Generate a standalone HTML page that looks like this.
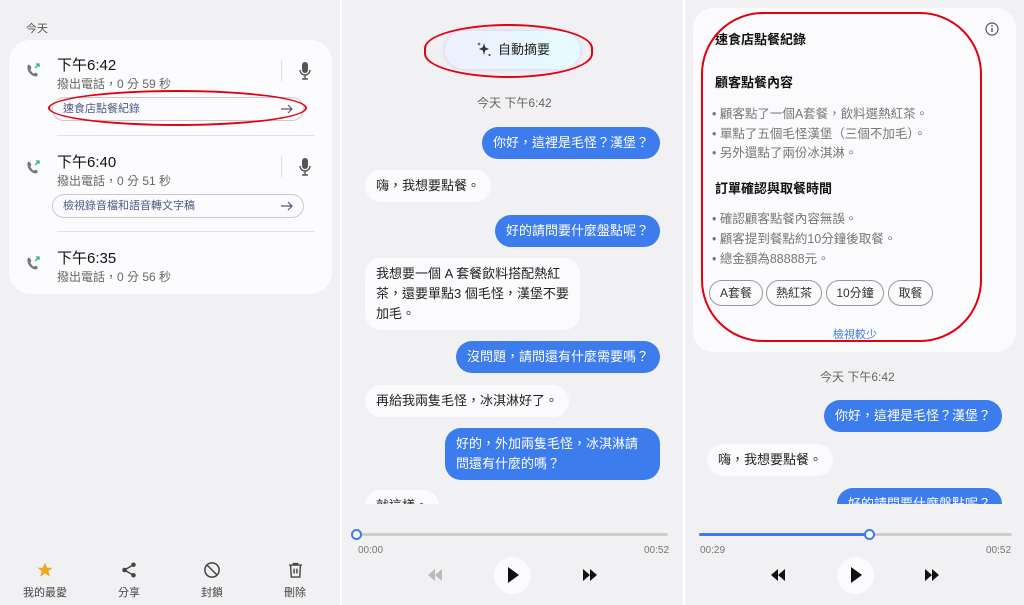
<!DOCTYPE html>
<html><head><meta charset="utf-8"><style>
*{margin:0;padding:0;box-sizing:border-box}
body{width:1024px;height:605px;background:#f1f1f3;font-family:"Liberation Sans","Noto Sans CJK TC",sans-serif;position:relative;overflow:hidden}
.a{position:absolute;white-space:nowrap}
.sep{position:absolute;top:0;width:2px;height:605px;background:#fff}
.t{font-size:15px;color:#111}
.s{font-size:12px;color:#666}
.pill{position:absolute;height:24px;border:1px solid #c8cad0;border-radius:12px;font-size:11px;color:#4d5a85;padding-left:10px;line-height:22px;background:#fbfbfd}
.pill svg{position:absolute;right:9px;top:5px}
.b{position:absolute;font-size:13px;line-height:20px;padding:6px 11px;border-radius:16px;white-space:nowrap}
.bl{background:#3c7cec;color:#fff}
.wh{background:#fbfbfd;color:#222}
.li{font-size:12.5px;color:#777}
.chip{position:absolute;top:280px;height:26px;border:1px solid #999;border-radius:13px;font-size:12px;color:#333;line-height:24px;text-align:center}
.lab{font-size:11px;color:#444;text-align:center;width:60px}
</style></head><body>
<div class="sep" style="left:340px"></div>
<div class="sep" style="left:683px"></div>

<!-- Panel 1 -->
<div class="a" style="left:26px;top:20px;font-size:11px;color:#555">今天</div>
<div class="a" style="left:9px;top:40px;width:323px;height:254px;background:#fcfcfe;border-radius:22px"></div>
<svg class="a" style="left:25px;top:62px" width="16" height="16" viewBox="0 0 16 16"><path d="M3 3c1-1 2 0 3 2s-1 2-.5 3 2 3 3 3.5 1.5-1.5 3-.5 1.5 2 .5 3-4 .5-7-2.5S2 4 3 3z" fill="#777"/><path d="M10 6l4-4M11 2h3v3" stroke="#2bb673" stroke-width="1.3" fill="none"/></svg>
<svg class="a" style="left:25px;top:159px" width="16" height="16" viewBox="0 0 16 16"><path d="M3 3c1-1 2 0 3 2s-1 2-.5 3 2 3 3 3.5 1.5-1.5 3-.5 1.5 2 .5 3-4 .5-7-2.5S2 4 3 3z" fill="#777"/><path d="M10 6l4-4M11 2h3v3" stroke="#2bb673" stroke-width="1.3" fill="none"/></svg>
<svg class="a" style="left:25px;top:255px" width="16" height="16" viewBox="0 0 16 16"><path d="M3 3c1-1 2 0 3 2s-1 2-.5 3 2 3 3 3.5 1.5-1.5 3-.5 1.5 2 .5 3-4 .5-7-2.5S2 4 3 3z" fill="#777"/><path d="M10 6l4-4M11 2h3v3" stroke="#2bb673" stroke-width="1.3" fill="none"/></svg>
<div class="a t" style="left:57px;top:54px">下午6:42</div>
<div class="a s" style="left:57px;top:75px">撥出電話，0 分 59 秒</div>
<div class="a" style="left:281px;top:60px;width:1px;height:21px;background:#ddd"></div>
<svg class="a" style="left:297px;top:61px" width="16" height="20" viewBox="0 0 16 20"><rect x="5" y="1" width="6" height="11" rx="3" fill="#555"/><path d="M3 9a5 5 0 0 0 10 0M8 14v4M5 18h6" stroke="#555" stroke-width="1.4" fill="none"/></svg>
<div class="pill" style="left:52px;top:97px;width:252px">速食店點餐紀錄<svg width="14" height="12" viewBox="0 0 14 12"><path d="M1 6h11M8 2l4 4-4 4" stroke="#4d5a85" stroke-width="1.2" fill="none"/></svg></div>
<div class="a" style="left:48px;top:90px;width:259px;height:36px;border:2.5px solid #e3000f;border-radius:50%"></div>
<div class="a" style="left:57px;top:135px;width:258px;height:1px;background:#e2e2e6"></div>
<div class="a t" style="left:57px;top:151px">下午6:40</div>
<div class="a s" style="left:57px;top:172px">撥出電話，0 分 51 秒</div>
<div class="a" style="left:281px;top:156px;width:1px;height:21px;background:#ddd"></div>
<svg class="a" style="left:297px;top:157px" width="16" height="20" viewBox="0 0 16 20"><rect x="5" y="1" width="6" height="11" rx="3" fill="#555"/><path d="M3 9a5 5 0 0 0 10 0M8 14v4M5 18h6" stroke="#555" stroke-width="1.4" fill="none"/></svg>
<div class="pill" style="left:52px;top:194px;width:252px">檢視錄音檔和語音轉文字稿<svg width="14" height="12" viewBox="0 0 14 12"><path d="M1 6h11M8 2l4 4-4 4" stroke="#4d5a85" stroke-width="1.2" fill="none"/></svg></div>
<div class="a" style="left:57px;top:231px;width:258px;height:1px;background:#e2e2e6"></div>
<div class="a t" style="left:57px;top:247px">下午6:35</div>
<div class="a s" style="left:57px;top:268px">撥出電話，0 分 56 秒</div>

<svg class="a" style="left:36px;top:561px" width="18" height="18" viewBox="0 0 24 24"><path d="M12 2l3 7h7l-5.5 4.5L18.5 21 12 16.5 5.5 21l2-7.5L2 9h7z" fill="#f5a51c"/></svg>
<svg class="a" style="left:120px;top:561px" width="18" height="18" viewBox="0 0 24 24"><circle cx="18" cy="5" r="3" fill="#444"/><circle cx="6" cy="12" r="3" fill="#444"/><circle cx="18" cy="19" r="3" fill="#444"/><path d="M18 5L6 12l12 7" stroke="#444" stroke-width="2" fill="none"/></svg>
<svg class="a" style="left:203px;top:561px" width="18" height="18" viewBox="0 0 24 24"><circle cx="12" cy="12" r="9.5" stroke="#444" stroke-width="2" fill="none"/><path d="M5.5 5.5l13 13" stroke="#444" stroke-width="2"/></svg>
<svg class="a" style="left:287px;top:561px" width="17" height="18" viewBox="0 0 24 24"><path d="M3 5h18M9 5V3h6v2M5 5l1 17h12l1-17M10 10v7M14 10v7" stroke="#444" stroke-width="2" fill="none"/></svg>
<div class="a lab" style="left:15px;top:584px">我的最愛</div>
<div class="a lab" style="left:99px;top:584px">分享</div>
<div class="a lab" style="left:182px;top:584px">封鎖</div>
<div class="a lab" style="left:265px;top:584px">刪除</div>

<!-- Panel 2 -->
<div class="a" style="left:445px;top:31px;width:135px;height:38px;border-radius:19px;background:linear-gradient(90deg,#eef0ff,#e6fbff);box-shadow:0 0 6px #c9ccf5;font-size:13px;color:#222;line-height:38px;padding-left:53px">自動摘要</div>
<svg class="a" style="left:476px;top:41px" width="16" height="16" viewBox="0 0 16 16"><path d="M8 2l1.2 4.3L13 8l-3.8 1.5L8 14l-1.2-4.5L3 8l3.8-1.7z" fill="#334"/><path d="M3 1l.5 1.5L5 3l-1.5.5L3 5l-.5-1.5L1 3l1.5-.5z" fill="#334"/><circle cx="13.5" cy="14" r="1" fill="#334"/></svg>
<div class="a" style="left:424px;top:24px;width:169px;height:54px;border:2.5px solid #e3000f;border-radius:50%/45%"></div>
<div class="a s" style="left:477px;top:94px">今天 下午6:42</div>
<div style="position:absolute;left:342px;top:110px;width:341px;height:394px;overflow:hidden">
<div class="b bl" style="right:23px;top:17px">你好，這裡是毛怪？漢堡？</div>
<div class="b wh" style="left:23px;top:60px">嗨，我想要點餐。</div>
<div class="b bl" style="right:23px;top:105px">好的請問要什麼盤點呢？</div>
<div class="b wh" style="left:23px;top:148px;white-space:normal;width:215px">我想要一個 A 套餐飲料搭配熱紅茶，還要單點3 個毛怪，漢堡不要加毛。</div>
<div class="b bl" style="right:23px;top:231px">沒問題，請問還有什麼需要嗎？</div>
<div class="b wh" style="left:23px;top:275px">再給我兩隻毛怪，冰淇淋好了。</div>
<div class="b bl" style="right:23px;top:318px;white-space:normal;width:215px">好的，外加兩隻毛怪，冰淇淋請問還有什麼的嗎？</div>
<div class="b wh" style="left:23px;top:380px">就這樣。</div>
</div>
<div class="a" style="left:357px;top:533px;width:311px;height:3px;background:#ccc;border-radius:2px"></div>
<div class="a" style="left:351px;top:529px;width:11px;height:11px;border:2px solid #3c7cec;border-radius:50%;background:#fff"></div>
<div class="a" style="left:358px;top:545px;font-size:10px;color:#777">00:00</div>
<div class="a" style="left:644px;top:545px;font-size:10px;color:#777">00:52</div>
<svg class="a" style="left:427px;top:569px" width="16" height="12" viewBox="0 0 16 12"><path d="M8 0L1 6l7 6zM15 0L8 6l7 6z" fill="#bbb"/></svg>
<div class="a" style="left:494px;top:557px;width:37px;height:37px;border-radius:50%;background:#fbfbfd"></div>
<svg class="a" style="left:507px;top:567px" width="12" height="16" viewBox="0 0 12 16"><path d="M1 0l11 8-11 8z" fill="#111"/></svg>
<svg class="a" style="left:582px;top:569px" width="16" height="12" viewBox="0 0 16 12"><path d="M1 0l7 6-7 6zM8 0l7 6-7 6z" fill="#111"/></svg>

<!-- Panel 3 -->
<div class="a" style="left:693px;top:8px;width:323px;height:344px;background:#fbfbfd;border-radius:20px"></div>
<div class="a" style="left:715px;top:29px;font-size:13px;font-weight:bold;color:#111">速食店點餐紀錄</div>
<svg class="a" style="left:985px;top:22px" width="14" height="14" viewBox="0 0 14 14"><circle cx="7" cy="7" r="6" stroke="#555" stroke-width="1.2" fill="none"/><path d="M7 6v4" stroke="#555" stroke-width="1.4"/><circle cx="7" cy="4" r=".9" fill="#555"/></svg>
<div class="a" style="left:715px;top:72px;font-size:13px;font-weight:bold;color:#111">顧客點餐內容</div>
<div class="a li" style="left:712px;top:103px">• 顧客點了一個A套餐，飲料選熱紅茶。</div>
<div class="a li" style="left:712px;top:123px">• 單點了五個毛怪漢堡（三個不加毛）。</div>
<div class="a li" style="left:712px;top:142px">• 另外還點了兩份冰淇淋。</div>
<div class="a" style="left:715px;top:178px;font-size:13px;font-weight:bold;color:#111">訂單確認與取餐時間</div>
<div class="a li" style="left:712px;top:208px">• 確認顧客點餐內容無誤。</div>
<div class="a li" style="left:712px;top:228px">• 顧客提到餐點約10分鐘後取餐。</div>
<div class="a li" style="left:712px;top:248px">• 總金額為88888元。</div>
<div class="chip" style="left:709px;width:54px">A套餐</div>
<div class="chip" style="left:766px;width:56px">熱紅茶</div>
<div class="chip" style="left:826px;width:58px">10分鐘</div>
<div class="chip" style="left:888px;width:45px">取餐</div>
<div class="a" style="left:833px;top:326px;font-size:11px;color:#3c7cec">檢視較少</div>
<div class="a" style="left:701px;top:12px;width:281px;height:330px;border:2.5px solid #e3000f;border-radius:62px"></div>
<div class="a s" style="left:820px;top:368px">今天 下午6:42</div>
<div style="position:absolute;left:685px;top:390px;width:339px;height:114px;overflow:hidden">
<div class="b bl" style="right:22px;top:10px">你好，這裡是毛怪？漢堡？</div>
<div class="b wh" style="left:22px;top:54px">嗨，我想要點餐。</div>
<div class="b bl" style="right:22px;top:98px">好的請問要什麼盤點呢？</div>
</div>
<div class="a" style="left:699px;top:533px;width:313px;height:3px;background:#ccc;border-radius:2px"></div>
<div class="a" style="left:699px;top:533px;width:171px;height:3px;background:#3c7cec;border-radius:2px"></div>
<div class="a" style="left:864px;top:529px;width:11px;height:11px;border:2px solid #3c7cec;border-radius:50%;background:#fff"></div>
<div class="a" style="left:700px;top:545px;font-size:10px;color:#777">00:29</div>
<div class="a" style="left:986px;top:545px;font-size:10px;color:#777">00:52</div>
<svg class="a" style="left:770px;top:569px" width="16" height="12" viewBox="0 0 16 12"><path d="M8 0L1 6l7 6zM15 0L8 6l7 6z" fill="#111"/></svg>
<div class="a" style="left:837px;top:557px;width:37px;height:37px;border-radius:50%;background:#fbfbfd"></div>
<svg class="a" style="left:850px;top:567px" width="12" height="16" viewBox="0 0 12 16"><path d="M1 0l11 8-11 8z" fill="#111"/></svg>
<svg class="a" style="left:924px;top:569px" width="16" height="12" viewBox="0 0 16 12"><path d="M1 0l7 6-7 6zM8 0l7 6-7 6z" fill="#111"/></svg>
</body></html>
